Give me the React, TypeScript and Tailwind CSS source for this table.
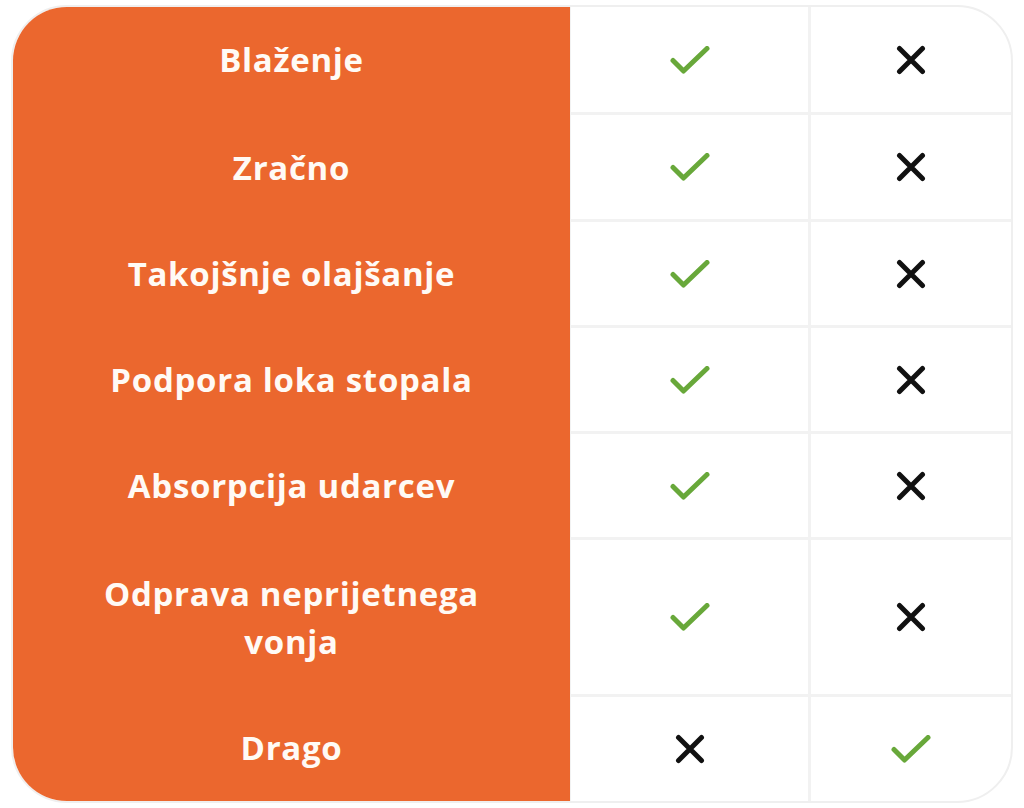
import React from 'react';

type Mark = 'yes' | 'no';

const rows: { label: React.ReactNode; a: Mark; b: Mark; h: string }[] = [
  { label: 'Blaženje', a: 'yes', b: 'no', h: 'h-[108px]' },
  { label: 'Zračno', a: 'yes', b: 'no', h: 'h-[107px]' },
  { label: 'Takojšnje olajšanje', a: 'yes', b: 'no', h: 'h-[106px]' },
  { label: 'Podpora loka stopala', a: 'yes', b: 'no', h: 'h-[106px]' },
  { label: 'Absorpcija udarcev', a: 'yes', b: 'no', h: 'h-[106px]' },
  { label: <>Odprava neprijetnega<br />vonja</>, a: 'yes', b: 'no', h: 'h-[157px]' },
  { label: 'Drago', a: 'no', b: 'yes', h: 'flex-1' },
];

function CheckIcon() {
  return (
    <svg width="40" height="28" viewBox="0 0 40 28" fill="none">
      <path d="M3 14.5 13.5 25 37 2.5" stroke="#68a83a" strokeWidth="5" strokeLinecap="round" strokeLinejoin="round" />
    </svg>
  );
}

function CrossIcon() {
  return (
    <svg width="30" height="30" viewBox="0 0 30 30" fill="none">
      <path d="M3.5 3.5 26.5 26.5M26.5 3.5 3.5 26.5" stroke="#111111" strokeWidth="5" strokeLinecap="round" />
    </svg>
  );
}

function Cell({ mark, last, right }: { mark: Mark; last: boolean; right?: boolean }) {
  return (
    <div
      className={`flex items-center justify-center border-[#f2f2f2] ${last ? '' : 'border-b-[3px]'} ${right ? '' : 'border-r-[3px]'}`}
    >
      {mark === 'yes' ? <CheckIcon /> : <CrossIcon />}
    </div>
  );
}

export default function App() {
  return (
    <div className="w-[1024px] h-[808px] bg-white pt-[5px] pl-[11px]">
      <div className="w-[1002px] h-[798px] rounded-[56px] border-[2px] border-[#efefef] overflow-hidden flex flex-col bg-white">
        {rows.map((row, i) => {
          const last = i === rows.length - 1;
          return (
            <div key={i} className={`grid grid-cols-[558px_240px_1fr] ${row.h}`}>
              <div className="flex items-center justify-center bg-[#eb672e] text-[#fffaf5] text-center font-bold text-[33px] tracking-[0.7px] leading-[48px] font-['Open_Sans','Noto_Sans',sans-serif] border-r-[1px] border-[#f2f2f2]">
                <span className="pb-[2px]">{row.label}</span>
              </div>
              <Cell mark={row.a} last={last} />
              <Cell mark={row.b} last={last} right />
            </div>
          );
        })}
      </div>
    </div>
  );
}
